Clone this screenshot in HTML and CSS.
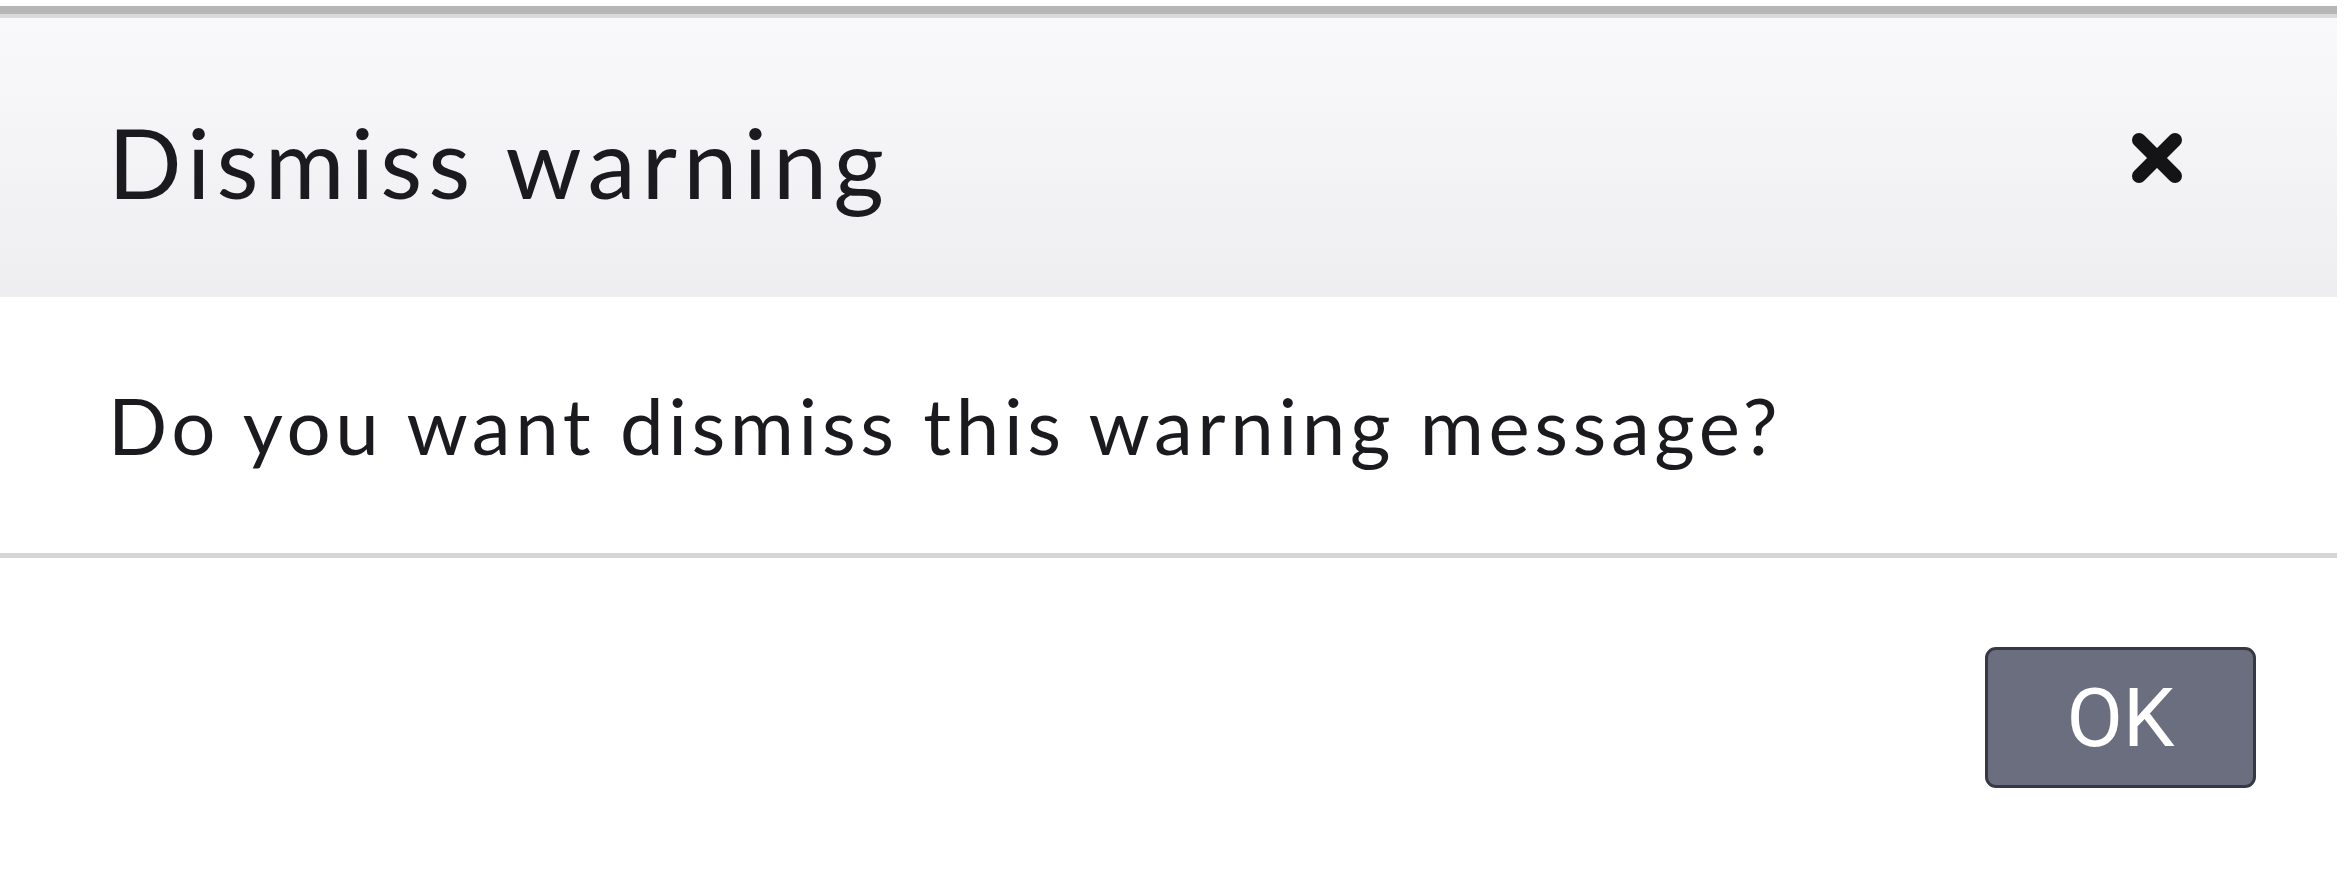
FILE: index.html
```html
<!DOCTYPE html>
<html>
<head>
<meta charset="utf-8">
<link rel="stylesheet" href="styles.css">
</head>
<body>
<div class="dialog">
  <div class="topbar"></div>
  <div class="header">
    <h1 class="title">Dismiss warning</h1>
    <button class="close" aria-label="Close">
      <svg width="52" height="52" viewBox="0 0 52 52"><path d="M8 8 L44 44 M44 8 L8 44" stroke="#141416" stroke-width="14" stroke-linecap="round" fill="none"/></svg>
    </button>
  </div>
  <div class="content">
    <p class="message">Do you want dismiss this warning message?</p>
  </div>
  <div class="footer">
    <button class="ok">OK</button>
  </div>
</div>
</body>
</html>
```

FILE: styles.css
```css
html, body {
  margin: 0;
  padding: 0;
  background: #ffffff;
}
body {
  font-family: "Lato", "Open Sans", sans-serif;
  color: #1b1b1f;
}
.dialog {
  width: 2337px;
  margin-top: 6px;
}
.topbar {
  height: 8px;
  background: #b6b6b6;
  border-bottom: 4px solid #dadada;
}
.header {
  height: 279px;
  background: linear-gradient(#f9f9fb, #eeeef1);
  display: flex;
  align-items: center;
  justify-content: space-between;
  padding: 0 154px 0 108px;
  box-sizing: border-box;
}
.title {
  margin: 0;
  font-size: 97px;
  font-weight: 400;
  line-height: 1;
  letter-spacing: 6.2px;
  padding-top: 8px;
}
.close {
  border: 0;
  background: none;
  padding: 0;
  margin: 0;
  width: 52px;
  height: 52px;
  display: block;
}
.close svg {
  display: block;
}
.content {
  height: 256px;
  display: flex;
  align-items: center;
  padding-left: 108px;
  border-bottom: 5px solid #d6d6d6;
}
.message {
  margin: 0;
  font-size: 78px;
  line-height: 1;
  letter-spacing: 4.6px;
}
.footer {
  display: flex;
  justify-content: flex-end;
  padding: 89px 81px 0 0;
}
.ok {
  width: 271px;
  height: 141px;
  box-sizing: border-box;
  background: #6b6e7e;
  border: 3px solid #363843;
  border-radius: 11px;
  color: #ffffff;
  font-family: "Roboto", "Liberation Sans", sans-serif;
  font-size: 82px;
  font-weight: 400;
  line-height: 1;
  padding: 0;
}
```
